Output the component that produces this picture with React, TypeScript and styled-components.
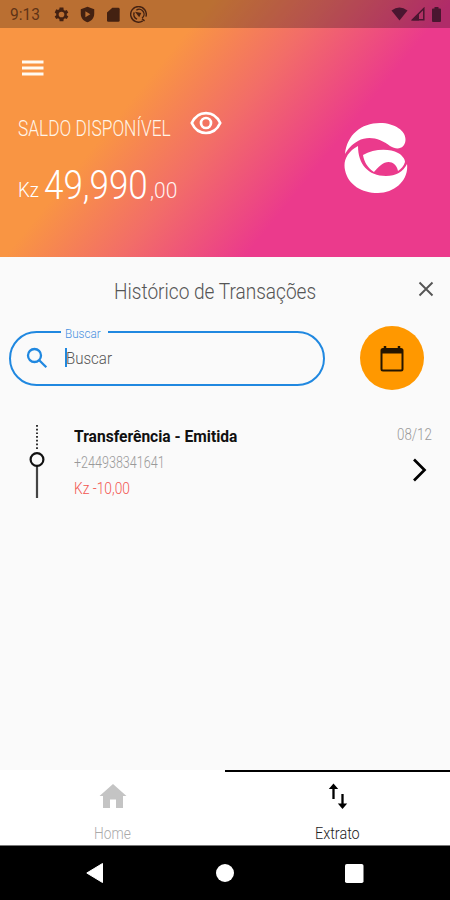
import React, { useLayoutEffect, useRef, useState } from "react";
import styled, { createGlobalStyle } from "styled-components";

const GlobalStyle = createGlobalStyle`
  * { box-sizing: border-box; }
  body { margin: 0; font-family: Roboto, "Liberation Sans", sans-serif; background: #fafafa; }
`;

const Screen = styled.div`
  display: flex;
  flex-direction: column;
  width: 450px;
  height: 900px;
  overflow: hidden;
  background: #fafafa;
`;

const Line = styled.span<{ $width: number; $size: number; $weight?: number; $color: string; $height: number }>`
  display: block;
  flex: none;
  width: ${(p) => p.$width}px;
  height: ${(p) => p.$height}px;
  line-height: ${(p) => p.$height}px;
  font-size: ${(p) => p.$size}px;
  font-weight: ${(p) => p.$weight ?? 300};
  color: ${(p) => p.$color};
  white-space: nowrap;
`;

const LineInner = styled.span`
  display: inline-block;
  transform-origin: 0 50%;
`;

type FitProps = { width: number; size: number; weight?: number; color: string; height: number; children: string };

/* Condenses a single line of text to its column width. */
function Fit({ width, size, weight, color, height, children }: FitProps) {
  const ref = useRef<HTMLSpanElement>(null);
  const [scale, setScale] = useState(1);
  useLayoutEffect(() => {
    if (ref.current) setScale(width / ref.current.offsetWidth);
  }, [width, size, children]);
  return (
    <Line $width={width} $size={size} $weight={weight} $color={color} $height={height}>
      <LineInner ref={ref} style={{ transform: `scaleX(${scale})` }}>{children}</LineInner>
    </Line>
  );
}

const Hero = styled.header`
  flex: none;
  height: 257px;
  background: linear-gradient(129deg, #f99543 165px, #f26d68 255px, #eb3a8c 352px);
`;

const StatusBar = styled.div`
  display: flex;
  justify-content: space-between;
  height: 28px;
  padding: 0 8px 0 10px;
  background: rgba(0, 0, 0, 0.25);
`;

const StatusGroup = styled.div`
  display: flex;
  align-items: center;
`;

const StatusIcons = styled.div<{ $gap: number; $left: number }>`
  display: flex;
  align-items: center;
  gap: ${(p) => p.$gap}px;
  margin-left: ${(p) => p.$left}px;
  svg { display: block; }
`;

const HeroBody = styled.div`
  display: flex;
  justify-content: space-between;
  height: 229px;
  padding: 0 42px 0 18px;
`;

const Balance = styled.div`
  display: flex;
  flex-direction: column;
`;

const IconButton = styled.button`
  display: block;
  flex: none;
  padding: 0;
  border: 0;
  background: none;
  svg { display: block; }
`;

const MenuButton = styled(IconButton)`
  width: 22px;
  margin: 32px 0 0 4px;
`;

const BalanceLabel = styled.div`
  display: flex;
  gap: 19px;
  height: 35px;
  margin-top: 34px;
  align-items: flex-start;
`;

const Amount = styled.div`
  display: flex;
  align-items: flex-end;
  height: 44px;
  margin-top: 19px;
`;

const AmountMain = styled.div`
  margin: 0 2px 0 5px;
`;

const AmountSmall = styled.div`
  padding-bottom: 2px;
`;

const Logo = styled.svg`
  display: block;
  margin-top: 95px;
`;

const Content = styled.main`
  flex: 1;
  display: flex;
  flex-direction: column;
`;

const TitleRow = styled.div`
  display: flex;
  align-items: flex-start;
  justify-content: space-between;
  height: 30px;
  margin-top: 18px;
  padding: 0 16px 0 114px;
  button { margin-top: 6px; }
`;

const SearchRow = styled.div`
  display: flex;
  align-items: flex-start;
  justify-content: space-between;
  padding: 0 26px 0 9px;
  margin-top: 19px;
`;

const Field = styled.fieldset`
  display: flex;
  align-items: flex-start;
  width: 316px;
  height: 62px;
  margin: 0;
  padding: 0 0 0 15px;
  min-width: 0;
  border: 2px solid #2088e0;
  border-radius: 28px;
`;

const Legend = styled.legend`
  margin-left: 35px;
  padding: 0 7px 0 4px;
  height: 15px;
`;

const FieldBody = styled.div`
  display: flex;
  align-items: center;
  width: 100%;
  height: 37px;
`;

const Caret = styled.i`
  width: 2px;
  height: 19px;
  margin: 0 -1px 0 17px;
  background: #2088e0;
`;

const DateButton = styled(IconButton)`
  display: flex;
  align-items: center;
  justify-content: center;
  width: 64px;
  height: 64px;
  border-radius: 50%;
  background: #ff9800;
  margin-top: 2px;
`;

const Transaction = styled.article`
  display: flex;
  margin-top: 33px;
  padding: 0 18px 0 29px;
`;

const Details = styled.div`
  flex: 1;
  display: flex;
  flex-direction: column;
  gap: 6px;
  margin: 3px 0 0 29px;
`;

const Side = styled.div`
  display: flex;
  flex-direction: column;
  align-items: flex-end;
  gap: 13px;
  margin-top: 2px;
  svg { display: block; margin-right: 5px; }
`;

const Tabs = styled.nav`
  flex: none;
  display: grid;
  grid-template-columns: 1fr 1fr;
  height: 76px;
  background: #fff;
  border-bottom: 1px solid #777;
`;

const Tab = styled.div<{ $active?: boolean }>`
  display: flex;
  flex-direction: column;
  align-items: center;
  border-top: 2px solid ${(p) => (p.$active ? "#000" : "#fff")};
  padding-top: 10px;
  gap: 14px;
  svg { display: block; }
`;

const SystemBar = styled.div`
  flex: none;
  display: flex;
  align-items: center;
  justify-content: space-between;
  height: 54px;
  padding: 0 86px;
  background: #000;
`;

const ink = "rgba(48, 20, 12, 0.86)";

export default function App() {
  return (
    <>
      <GlobalStyle />
      <Screen>
        <Hero>
          <StatusBar>
            <StatusGroup>
              <Fit width={30} size={16} weight={400} color="rgba(70,35,15,.8)" height={31}>9:13</Fit>
              <StatusIcons $gap={9} $left={13}>
                <svg width="17" height="17" viewBox="0 0 24 24" fill={ink}>
                  <path fillRule="evenodd" d="M19.4 13a7.500 7.500 0 0 0 0-2l2.200-1.700-2.200-3.700-2.600 1a8 8 0 0 0-1.700-1L14.700 2H9.300l-.4 2.700a8 8 0 0 0-1.700 1l-2.600-1L2.400 9.300 4.600 11a7.500 7.500 0 0 0 0 2l-2.200 1.700 2.200 3.700 2.600-1a8 8 0 0 0 1.700 1l.4 3h5.400l.4-3a8 8 0 0 0 1.700-1l2.600 1 2.200-3.700zM12 16a4 4 0 1 1 0-8 4 4 0 0 1 0 8z" />
                </svg>
                <svg width="17" height="17" viewBox="0 0 24 24" fill={ink}>
                  <path fillRule="evenodd" d="M12 1 2.500 4.500V11c0 6 4 10.500 9.500 12 5.500-1.500 9.500-6 9.500-12V4.500zM9 7.500v8.500l7-4.200z" />
                </svg>
                <svg width="16" height="17" viewBox="0 0 24 24" fill={ink}>
                  <path d="M20 2h-9L3 9v12a2 2 0 0 0 2 2h15a2 2 0 0 0 2-2V4a2 2 0 0 0-2-2z" />
                </svg>
                <svg width="17" height="17" viewBox="0 0 24 24" fill="none" stroke={ink} strokeWidth="2">
                  <path d="M18 21A11 11 0 1 1 22.500 15" />
                  <path d="M10 18.500A6.800 6.800 0 0 1 6 9M9 6a6.800 6.800 0 0 1 8 11M17 18l3.500 3" />
                  <path d="M7 8l9 2-3 6z" fill={ink} stroke="none" />
                </svg>
              </StatusIcons>
            </StatusGroup>
            <StatusIcons $gap={3} $left={0}>
              <svg width="17" height="14" viewBox="0 0 17 14" fill="#4a1630"><path d="M8.500 13.500.5 3.500Q8.500-2.500 16.500 3.500z" /></svg>
              <svg width="14" height="14" viewBox="0 0 14 14">
                <path d="M1.500 12.800 12.800 1.500v11.300z" fill="none" stroke="#4a1630" strokeWidth="1.500" />
                <path d="M1 13.500 8 6.500v7z" fill="#4a1630" />
              </svg>
              <svg width="14" height="15" viewBox="0 0 14 15" fill="#4a1630"><path d="M6.500 0h4v1.500H12q1 0 1 1V14q0 1-1 1H5q-1 0-1-1V2.500q0-1 1-1h1.500z" /></svg>
            </StatusIcons>
          </StatusBar>
          <HeroBody>
            <Balance>
              <MenuButton aria-label="Menu">
                <svg width="22" height="16" viewBox="0 0 22 16" stroke="#fffaf2" strokeWidth="2.800"><path d="M0 2h21.500M0 8h21.500M0 14h21.500" /></svg>
              </MenuButton>
              <BalanceLabel>
                <Fit width={153} size={21.500} color="#fff4e8" height={38}>SALDO DISPONÍVEL</Fit>
                <IconButton aria-label="Mostrar saldo">
                  <svg width="32" height="26" viewBox="0 0 32 26" fill="none" stroke="#fff" strokeWidth="2.700">
                    <path d="M1.800 13C7.800-.3 24.200-.3 30.200 13 24.200 26.300 7.800 26.300 1.800 13z" />
                    <circle cx="16" cy="13" r="5" />
                  </svg>
                </IconButton>
              </BalanceLabel>
              <Amount>
                <AmountSmall><Fit width={21} size={20.500} color="#fff" height={32}>Kz</Fit></AmountSmall>
                <AmountMain><Fit width={104} size={40} color="#fff" height={44}>49,990</Fit></AmountMain>
                <AmountSmall><Fit width={27} size={22.500} color="#fff4f2" height={32}>,00</Fit></AmountSmall>
              </Amount>
            </Balance>
            <Logo width="64" height="71" viewBox="0 0 64 71" fill="#fff">
              <path d="M1 31C3 12 17 0 36 0 51 0 62 8 61.500 17 61 25 54 28 46 23 37 16 25 12 14 18 7 22 4 26 1 31z" />
              <path d="M19 32C29 26 45 25 54 30 58 32 61 36 61 39 60 43 57 46 54 48 52 38 43 37 37 42 34 44 32 47 30 49 24 45 20 39 19 32z" />
              <path d="M14 23C3 29-1 38 1 47 4 62 18 70 34 70 51 70 65 57 63 41 59 49 52 53 42 53 24 53 14 41 14 23z" />
            </Logo>
          </HeroBody>
        </Hero>
        <Content>
          <TitleRow>
            <Fit width={202} size={22} color="#555" height={33}>Histórico de Transações</Fit>
            <IconButton aria-label="Fechar">
              <svg width="16" height="16" viewBox="0 0 16 16" stroke="#555" strokeWidth="1.900"><path d="m1.500 1.500 13 13m0-13-13 13" /></svg>
            </IconButton>
          </TitleRow>
          <SearchRow>
            <Field>
              <Legend><Fit width={36} size={12} color="#478fe0" height={21}>Buscar</Fit></Legend>
              <FieldBody>
                <svg width="22" height="22" viewBox="0 0 22 22" fill="none" stroke="#2088e0" strokeWidth="2.300"><circle cx="8.500" cy="8.500" r="6.500" /><path d="m13 13 7.300 7.300" /></svg>
                <Caret />
                <Fit width={46} size={17} color="#555" height={24}>Buscar</Fit>
              </FieldBody>
            </Field>
            <DateButton aria-label="Data">
              <svg width="24" height="27" viewBox="0 0 24 27" fill="none" stroke="#241500" strokeWidth="2">
                <rect x="1.500" y="4" width="21" height="21.500" rx="1.500" />
                <path d="M1 5.500h22M5 1v4M19 1v4" strokeWidth="2.500" />
                <path d="M2 7h20" strokeWidth="3" />
              </svg>
            </DateButton>
          </SearchRow>
          <Transaction>
            <svg width="16" height="76" viewBox="0 0 16 76" fill="none" stroke="#111">
              <path d="M8 2v26" strokeWidth="1.700" strokeDasharray="1.700 2" />
              <path d="M8 43v32" stroke="#444" strokeWidth="2.200" />
              <circle cx="8" cy="36.500" r="6.400" strokeWidth="2.200" />
            </svg>
            <Details>
              <Fit width={163} size={17} weight={700} color="#111" height={20}>Transferência - Emitida</Fit>
              <Fit width={91} size={16} color="#999" height={21}>+244938341641</Fit>
              <Fit width={56} size={16} color="#f25550" height={20}>Kz -10,00</Fit>
            </Details>
            <Side>
              <Fit width={35} size={16} color="#999" height={20}>08/12</Fit>
              <svg width="15" height="24" viewBox="0 0 15 24" fill="none" stroke="#000" strokeWidth="2.700"><path d="M2 1.500 12.500 12 2 22.500" /></svg>
            </Side>
          </Transaction>
        </Content>
        <Tabs>
          <Tab>
            <svg width="28" height="28" viewBox="0 0 28 28" fill="#c4c4c4"><path d="M14 2 27.500 14h-3.500v12h-7v-8.500h-6V26H4V14H.5z" /></svg>
            <Fit width={37} size={16} color="#aaa" height={20}>Home</Fit>
          </Tab>
          <Tab $active>
            <svg width="20" height="28" viewBox="0 0 20 28" fill="none" stroke="#000" strokeWidth="2.300">
              <path d="M5.500 17V4M14.500 12v13" />
              <path d="M.8 7 5.500 1.500 10.200 7zM9.800 21.500l4.700 5.500 4.700-5.500z" fill="#000" stroke="none" />
            </svg>
            <Fit width={45} size={16} color="#222" height={20}>Extrato</Fit>
          </Tab>
        </Tabs>
        <SystemBar>
          <svg width="18" height="20" viewBox="0 0 18 20" fill="#fff"><path d="M16.500.5v19L.8 10z" stroke="#fff" strokeLinejoin="round" /></svg>
          <svg width="18" height="18" viewBox="0 0 18 18" fill="#fff"><circle cx="9" cy="9" r="9" /></svg>
          <svg width="19" height="19" viewBox="0 0 19 19" fill="#fff"><rect width="18.500" height="19" rx="1.800" /></svg>
        </SystemBar>
      </Screen>
    </>
  );
}
